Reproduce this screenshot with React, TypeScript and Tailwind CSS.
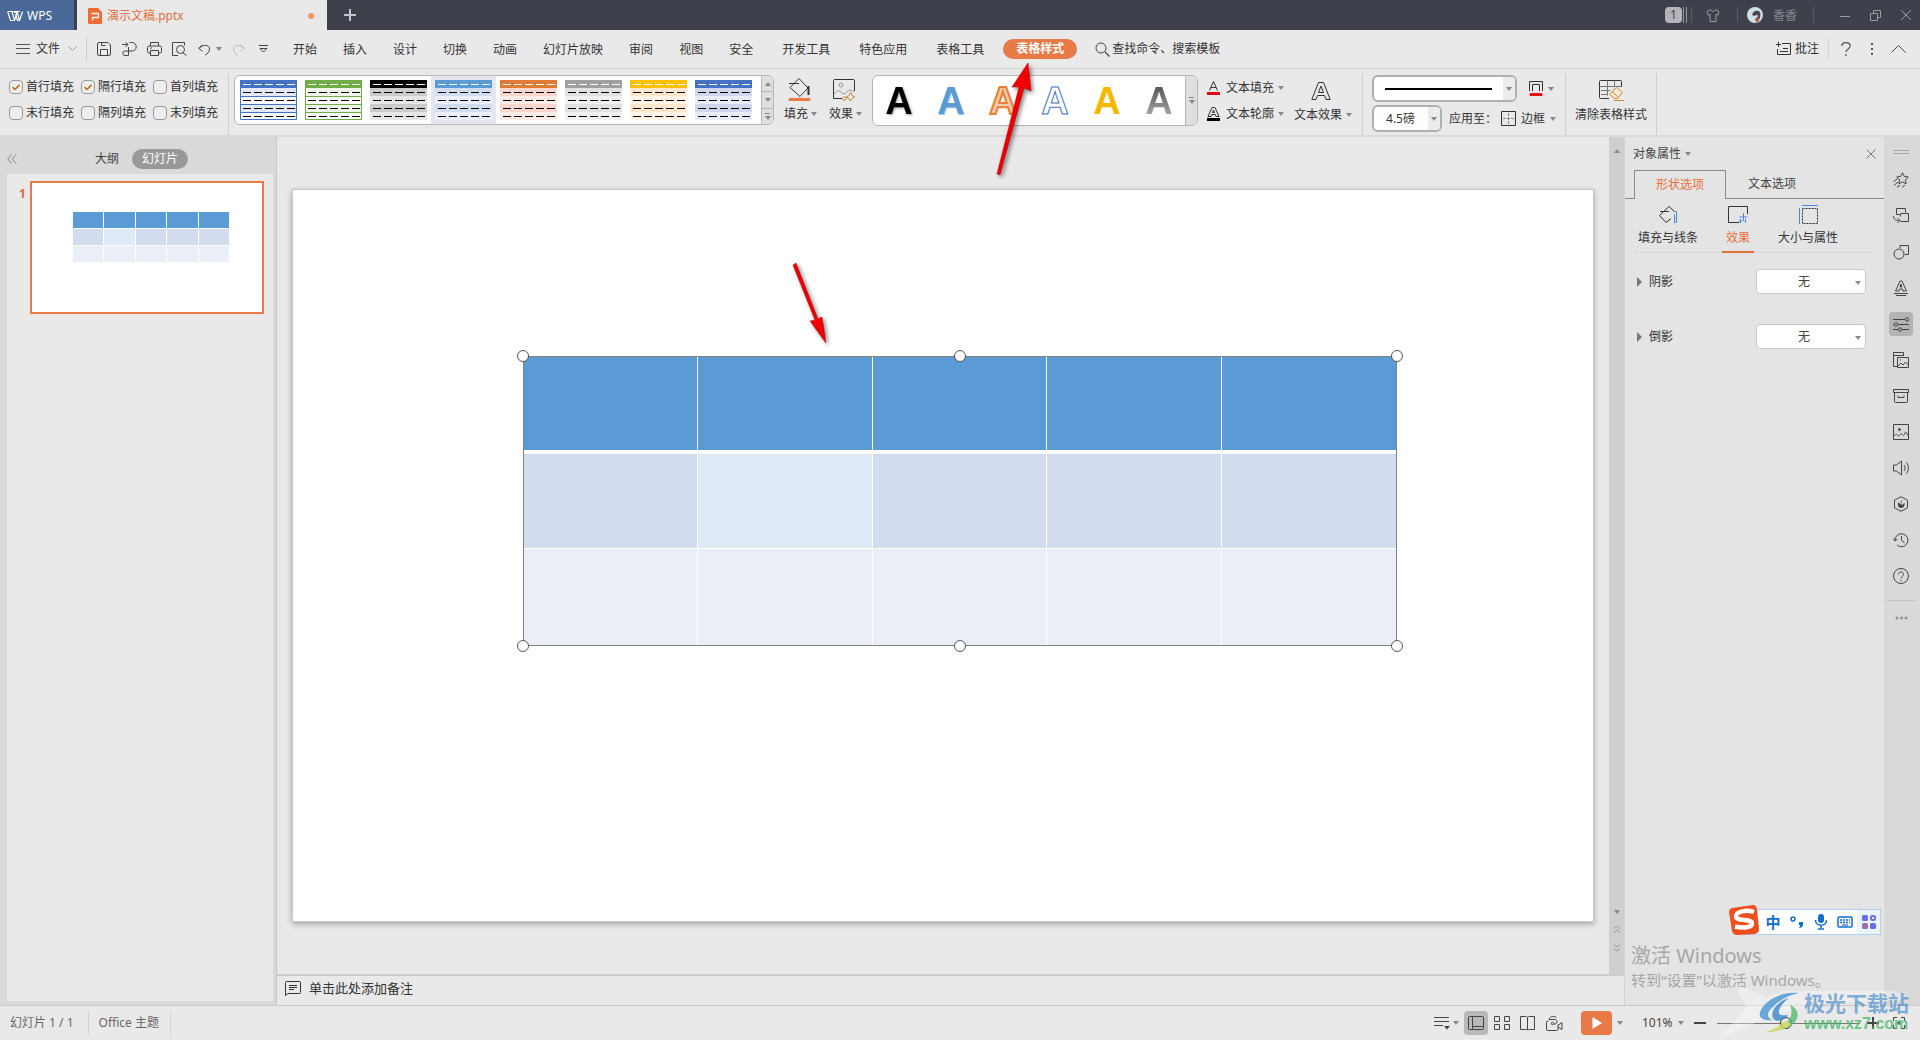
import { useState } from 'react'
import type { ReactNode } from 'react'

type IconProps = { w?: number; h?: number; className?: string; children: ReactNode }

function Icon({ w = 16, h = 16, className = '', children }: IconProps) {
  return (
    <svg
      width={w}
      height={h}
      viewBox={`0 0 ${w} ${h}`}
      fill="none"
      stroke="currentColor"
      strokeLinejoin="round"
      className={`shrink-0 ${className}`}
      aria-hidden="true"
    >
      {children}
    </svg>
  )
}

function Caret({ className = '' }: { className?: string }) {
  return (
    <Icon w={6} h={4} className={`text-[#888] ${className}`}>
      <path d="M0 0h6L3 4z" fill="currentColor" stroke="none" />
    </Icon>
  )
}

function CaretUp() {
  return (
    <Icon w={6} h={4} className="text-[#888]">
      <path d="M0 4h6L3 0z" fill="currentColor" stroke="none" />
    </Icon>
  )
}

const menuShort = ['开始', '插入', '设计', '切换', '动画', '幻灯片放映', '审阅', '视图', '安全']
const menuLong = ['开发工具', '特色应用', '表格工具']

const fillOptions = [
  { label: '首行填充', on: true },
  { label: '隔行填充', on: true },
  { label: '首列填充', on: false },
  { label: '末行填充', on: false },
  { label: '隔列填充', on: false },
  { label: '末列填充', on: false },
]

const tableStyles = [
  { head: '#4472c4', a: '#e2e8f5', b: '#ffffff', lines: true },
  { head: '#70ad47', a: '#eef5e8', b: '#ffffff', lines: true },
  { head: '#000000', a: '#cbcbcb', b: '#e7e7e7', lines: false },
  { head: '#5b9bd5', a: '#d2deef', b: '#eaeff7', lines: false },
  { head: '#e07b36', a: '#f8d7cd', b: '#fcece8', lines: false },
  { head: '#a0a0a0', a: '#e1e1e1', b: '#f0f0f0', lines: false },
  { head: '#ffc000', a: '#ffe8cb', b: '#fff4e7', lines: false },
  { head: '#4472c4', a: '#cfd5ea', b: '#e9ebf5', lines: false },
]

const wordArt = [
  'text-black drop-shadow-[1px_1px_1px_#999]',
  'text-[#5b9bd5] drop-shadow-[1px_1px_0px_#a5c8e8]',
  'text-[#f8cbad] [-webkit-text-stroke:2px_#ed7d31]',
  'text-white [-webkit-text-stroke:1px_#4472c4]',
  'text-[#f5b800]',
  'bg-gradient-to-b from-[#4a4a4a] to-[#b5b5b5] bg-clip-text text-transparent',
]

const bands = ['bg-[#5b9bd5]', 'bg-[#d2deef]', 'bg-[#eaeff7]']
const cols = [0, 1, 2, 3, 4]

function StyleThumb({ head, a, b, lines }: { head: string; a: string; b: string; lines: boolean }) {
  return (
    <Icon w={57} h={40}>
      {[0, 1, 2, 3, 4].map((row) => (
        <g key={row} stroke="none">
          <rect x="0" y={row * 8} width="57" height="8" fill={row === 0 ? head : row % 2 ? a : b} />
          {cols.map((c) => (
            <rect key={c} x={3 + c * 11} y={row * 8 + 4} width="8" height="1" fill={row === 0 ? '#fff' : '#000'} />
          ))}
        </g>
      ))}
      {lines && (
        <path d="M.5 0v39.5h56V0M0 16.500h57M0 24.500h57M0 32.500h57" stroke={head} />
      )}
    </Icon>
  )
}

function TitleBar() {
  return (
    <header className="flex h-[30px] shrink-0 items-center bg-[#3e414b] text-[#b9bac0]">
      <button className="flex h-full w-[74px] items-center gap-1 bg-[#4a6899] pl-[7px] pt-px text-white">
        <Icon className="text-white" h={12}>
          <path d="M1 1.500h4l2.500 9 2.500-8h-3M4 1.500h9M15.500 1.500l-3 9-2.500-9M6.500 10.500h-3l-2.800-9M12.500 10.500h-2L8.500 4" strokeWidth="1.200" />
        </Icon>
        <span>WPS</span>
      </button>
      <div className="ml-[3px] flex h-full w-[250px] items-center bg-[#e9e9e9] pl-[11px] pr-[13px] pt-px text-[#e07040]">
        <Icon w={14} className="mr-[5px]">
          <path d="M1 0h9l4 4v11a1 1 0 0 1-1 1H1a1 1 0 0 1-1-1V1a1 1 0 0 1 1-1z" fill="#f06a3a" stroke="none" />
          <path d="M3.500 5.500h7v4h-6v3" stroke="#fff" strokeWidth="1.300" />
        </Icon>
        <span className="flex-1">演示文稿.pptx</span>
        <span className="size-[6px] rounded-full bg-[#f0935c]" />
      </div>
      <button aria-label="新建" className="ml-[17px]">
        <Icon w={12} h={12} className="text-[#c5c6ca]">
          <path d="M6 0v12M0 6h12" strokeWidth="2" />
        </Icon>
      </button>
      <div className="ml-auto flex h-full items-center">
        <span className="flex h-4 w-[17px] items-center justify-center rounded-sm bg-[#b4b5ba] text-[#3e414b]">1</span>
        <span className="ml-px h-4 w-1 border-x border-[#9a9ca2]" />
        <span className="ml-1 h-4 w-px bg-[#585b65]" />
        <button aria-label="皮肤" className="ml-[14px]">
          <Icon w={14} h={14} className="text-[#9a9ca3]">
            <path d="M4.500 1.500 1 3.500l1 3.500 2-.5v7h6v-7l2 .5 1-3.500-3.500-2C9 4 5 4 4.500 1.500z" />
          </Icon>
        </button>
        <span className="ml-[17px] h-4 w-px bg-[#585b65]" />
        <Icon w={16} className="ml-[9px]">
          <circle cx="8" cy="8" r="8" fill="#cfe0e4" stroke="none" />
          <path d="M5 8c1-4 4-5 6.500-4 2.500 1 2 4 1.500 7l-2 3c.5-3 .5-5-1-6.500C9 9 7 9 5 8z" fill="#4b444a" stroke="none" />
          <path d="M8 12l3-3 1 5-3 1.500z" fill="#a85a50" stroke="none" />
        </Icon>
        <span className="ml-[10px] pt-px text-[#85878f]">香香</span>
        <span className="ml-[16px] h-4 w-px bg-[#585b65]" />
        <button aria-label="最小化" className="ml-[26px]">
          <Icon w={10} h={10} className="text-[#9a9ca3]"><path d="M0 6.500h10" /></Icon>
        </button>
        <button aria-label="还原" className="ml-5">
          <Icon w={11} h={11} className="text-[#9a9ca3]">
            <path d="M.5 3.500h7v7h-7zM3.500 3.500v-3h7v7h-3" />
          </Icon>
        </button>
        <button aria-label="关闭" className="ml-5 mr-[9px]">
          <Icon w={10} h={10} className="text-[#9a9ca3]"><path d="M0 0l10 10M10 0L0 10" /></Icon>
        </button>
      </div>
    </header>
  )
}

function MenuBar() {
  return (
    <nav className="flex h-[39px] shrink-0 items-center border-b border-[#d4d4d4] bg-[#e9e9e9] text-[#333]">
      <button className="ml-4 flex items-center">
        <Icon w={14} h={10} className="mr-[6px] text-[#555]"><path d="M0 .5h14M0 4.500h14M0 9.500h14" /></Icon>
        文件
        <Icon w={9} h={6} className="ml-2 text-[#999]"><path d="M.5.5l4 4 4-4" /></Icon>
      </button>
      <span className="ml-[9px] h-6 w-px bg-[#cbcbcb]" />
      <div className="ml-[10px] flex items-center text-[#444]">
        <button aria-label="保存">
          <Icon w={14} h={14}>
            <path d="M.5 2a1.500 1.500 0 0 1 1.500-1.500h9l2.500 2.500v9a1.500 1.500 0 0 1-1.500 1.500H2A1.500 1.500 0 0 1 .5 12zM3.500 13.500v-6h7v6M4.500.5v3h4" />
          </Icon>
        </button>
        <button aria-label="输出为PDF" className="ml-[11px]">
          <Icon w={15} h={14}>
            <path d="M7.500.5h2.500a4 4 0 0 1 0 8.500H3a2 2 0 0 0 0 4.500h3.500V5M0 2.500h6M3.500.2L6 2.500 3.500 5" />
          </Icon>
        </button>
        <button aria-label="打印" className="ml-[10px]">
          <Icon w={15} h={14}>
            <path d="M3.500 4V.5h8V4M3.500 11H2A1.500 1.500 0 0 1 .5 9.500v-4A1.500 1.500 0 0 1 2 4h11a1.500 1.500 0 0 1 1.500 1.500v4A1.500 1.500 0 0 1 13 11h-1.500M3.500 8.500h8v5h-8zM3 6h2" />
          </Icon>
        </button>
        <button aria-label="打印预览" className="ml-[10px]">
          <Icon w={15} h={14}>
            <path d="M6 13.500H.5V.5h12v3M10.500 10.500l4 3" />
            <circle cx="8.500" cy="7.500" r="4" />
          </Icon>
        </button>
        <button aria-label="撤销" className="ml-[11px] flex items-center gap-[5px]">
          <Icon w={13} h={13}><path d="M4.500 2L.8 5.300 4.500 8.500M1 5.500c3-4 10.500-4.500 10.500.5 0 3-2 5-4.500 6" /></Icon>
          <Caret />
        </button>
        <button aria-label="恢复" className="ml-[10px] text-[#bbb]">
          <Icon w={13} h={13}><path d="M8.500 2l3.700 3.300L8.500 8.500M12 5.500C9 1.500 1.500 1 1.500 6c0 3 2 5 4.500 6" /></Icon>
        </button>
        <button aria-label="自定义快速访问工具栏" className="ml-[14px]">
          <Icon w={9} h={8}><path d="M0 .5h9M1 3.500h7L4.500 7z" /></Icon>
        </button>
      </div>
      <div className="ml-[25px] flex items-center gap-[26px] pt-[2px]">
        {menuShort.map((m) => (
          <button key={m}>{m}</button>
        ))}
      </div>
      <div className="ml-[29px] flex items-center gap-[29px] pt-[2px]">
        {menuLong.map((m) => (
          <button key={m}>{m}</button>
        ))}
      </div>
      <button className="ml-[19px] h-5 rounded-full bg-[#e87a48] px-[13px] font-bold text-white">表格样式</button>
      <button className="ml-[18px] flex items-center gap-[2px]">
        <Icon w={15} h={15} className="text-[#444]">
          <circle cx="6" cy="6" r="5" />
          <path d="M10 10l4.500 4.500" strokeWidth="1.300" />
        </Icon>
        查找命令、搜索模板
      </button>
      <button className="ml-auto flex items-center gap-[4px]">
        <Icon w={15} h={14}>
          <path d="M6 1.500h8.500v11h-13V7M2.500 0v5M0 2.500h5M7 6.500h5M4 9.500h8" />
        </Icon>
        批注
      </button>
      <span className="ml-[9px] h-5 w-px bg-[#d4d4d4]" />
      <button aria-label="帮助" className="ml-[12px]">
        <Icon w={10} h={14} className="text-[#555]">
          <path d="M.8 4c0-4.500 8.400-4.500 8.400 0 0 3-4.200 3-4.200 6M5 12v2" strokeWidth="1.200" />
        </Icon>
      </button>
      <button aria-label="更多" className="ml-[20px]">
        <Icon w={2} h={12} className="text-[#555]"><path d="M1 0v2M1 5v2M1 10v2" strokeWidth="2" /></Icon>
      </button>
      <button aria-label="收起功能区" className="ml-[18px] mr-[14px]">
        <Icon w={15} h={8} className="text-[#444]"><path d="M.5 7.500l7-7 7 7" /></Icon>
      </button>
    </nav>
  )
}

function Ribbon() {
  const [checked, setChecked] = useState(fillOptions.map((o) => o.on))
  return (
    <div className="flex h-[68px] shrink-0 items-start border-b-2 border-[#dadada] bg-[#e9e9e9] text-[#333]">
      {/* Fill options */}
      <div className="ml-[9px] mt-[10px] grid grid-cols-3 gap-y-[10px]">
        {fillOptions.map((o, i) => (
          <label key={o.label} className="relative flex h-4 w-[72px] items-center gap-[3px] whitespace-nowrap">
            <input
              type="checkbox"
              checked={checked[i]}
              onChange={() => setChecked(checked.map((c, j) => (j === i ? !c : c)))}
              className="size-[14px] shrink-0 appearance-none rounded-sm border border-[#999] bg-[#efefef]"
            />
            {checked[i] && (
              <Icon w={8} h={7} className="pointer-events-none absolute left-[3px] top-[5px] text-[#b8741a]">
                <path d="M.5 3l2.500 2.500L7.500.8" strokeWidth="1.600" />
              </Icon>
            )}
            {o.label}
          </label>
        ))}
      </div>
      <span className="ml-[3px] mt-1 h-[62px] w-px bg-[#d0d0d0]" />

      {/* Table style gallery */}
      <div className="ml-[5px] mt-[6px] flex h-[50px] overflow-hidden rounded-md border border-[#b5b5b5] bg-white">
        <div className="flex pl-[1px] pr-[5px]">
          {tableStyles.map((s, i) => (
            <button
              key={i}
              aria-label={`表格样式 ${i + 1}`}
              className={`flex h-full w-[65px] items-center justify-center ${i === 3 ? 'bg-[#e6e7ec]' : ''}`}
            >
              <StyleThumb {...s} />
            </button>
          ))}
        </div>
        <div className="flex w-3 flex-col border-l border-[#b5b5b5] bg-[#dedede]">
          <button aria-label="上一行" className="flex flex-1 items-center justify-center border-b border-[#b5b5b5]"><CaretUp /></button>
          <button aria-label="下一行" className="flex flex-1 items-center justify-center border-b border-[#b5b5b5]"><Caret /></button>
          <button aria-label="展开" className="flex flex-1 flex-col items-center justify-center gap-[2px]">
            <span className="h-px w-[5px] bg-[#888]" />
            <Caret />
          </button>
        </div>
      </div>

      <button className="ml-[10px] mt-[8px] flex w-[33px] flex-col items-center gap-[5px]">
        <Icon w={24} h={24} className="mr-1">
          <path d="M2 6.500h10M12 1.500l9 9.500-8 8.500-10-9z" />
          <path d="M21.500 9v9" strokeWidth="2" />
          <path d="M3 22.500h19" stroke="#e87a48" strokeWidth="3" strokeLinecap="round" />
        </Icon>
        <span className="flex items-center gap-[3px] whitespace-nowrap">填充<Caret /></span>
      </button>
      <button className="ml-[12px] mt-[8px] flex w-[33px] flex-col items-center gap-[5px]">
        <Icon w={24} h={24} className="mr-1">
          <path d="M10 21.500H1.500v-18a1 1 0 0 1 1-1h19a1 1 0 0 1 1 1V14" />
          <circle cx="9" cy="8" r="2" stroke="#999" />
          <path d="M2 17c4-4 5-4 8-1s5-3 8-3l4 2" stroke="#999" />
          <path d="M18.500 15.500l1.500 3 3 1.500-3 1.500-1.500 3-1.500-3-3-1.500 3-1.500zM12 19.500l2.500 2-2.500 2.500-1.500-2.500z" stroke="#c98a3a" />
        </Icon>
        <span className="flex items-center gap-[3px] whitespace-nowrap">效果<Caret /></span>
      </button>

      {/* Word art gallery */}
      <div className="ml-[10px] mt-[6px] flex h-[51px] overflow-hidden rounded-md border border-[#b5b5b5] bg-white">
        <div className="flex">
          {wordArt.map((cls, i) => (
            <button
              key={cls}
              aria-label={`艺术字 ${i + 1}`}
              className="flex w-[52px] items-center justify-center font-['Liberation_Sans',sans-serif] text-[38px] font-bold leading-none"
            >
              <span className={cls}>A</span>
            </button>
          ))}
        </div>
        <button aria-label="展开艺术字" className="flex w-3 flex-col items-center justify-center gap-[2px] border-l border-[#b5b5b5] bg-[#dedede]">
          <span className="h-px w-[5px] bg-[#888]" />
          <Caret />
        </button>
      </div>

      <div className="ml-[9px] mt-[10px] flex flex-col gap-[9px]">
        <button className="flex h-[17px] items-center">
          <Icon w={13} h={14} className="mr-[6px]">
            <path d="M2.500 9.500l4-9 4 9M4 6.500h5" />
            <path d="M1 12.500h11" stroke="#e60012" strokeWidth="3" strokeLinecap="round" />
          </Icon>
          文本填充<Caret className="ml-1" />
        </button>
        <button className="flex h-[17px] items-center">
          <Icon w={13} h={14} className="mr-[6px]">
            <path d="M1 9.500l4-9h3l4 9H9L8.300 7.500H4.700L4 9.500zM5.500 5.500h2l-1-2.500z" />
            <path d="M0 12.500h13" stroke="#000" strokeWidth="3" />
          </Icon>
          文本轮廓<Caret className="ml-1" />
        </button>
      </div>
      <button className="ml-[10px] mt-[12px] flex flex-col items-center gap-[6px]">
        <Icon w={20} h={20} className="mr-1">
          <path d="M.8 18.500L7.500 1.500h5l6.700 17H15l-1.500-4h-7l-1.500 4zM7.500 11.500h5L10 5z" />
        </Icon>
        <span className="flex items-center gap-1">文本效果<Caret /></span>
      </button>
      <span className="ml-[10px] mt-1 h-[62px] w-px bg-[#d0d0d0]" />

      {/* Border settings */}
      <div className="ml-[9px] mt-[6px] flex flex-col gap-[3px]">
        <div className="flex items-center">
          <button aria-label="线型" className="flex h-[27px] w-[145px] items-center overflow-hidden rounded-md border-2 border-[#b0b0b0] bg-white">
            <span className="ml-[11px] h-[2px] flex-1 bg-black" />
            <span className="ml-[11px] flex h-full w-3 items-center justify-center bg-[#ececec]"><Caret /></span>
          </button>
          <button aria-label="线条颜色" className="ml-3 flex items-center gap-[5px]">
            <Icon w={14} h={15}>
              <path d="M.5 10V.5h13V10M3.500 10V3.500h7V10" />
              <path d="M2 13.500h10" stroke="#e60012" strokeWidth="3" strokeLinecap="round" />
            </Icon>
            <Caret />
          </button>
        </div>
        <div className="flex items-center">
          <div className="relative">
            <select
              aria-label="线条粗细"
              className="h-[27px] w-[70px] appearance-none rounded-md border-2 border-[#b0b0b0] bg-white pl-3 text-xs text-[#333]"
            >
              <option>4.5磅</option>
            </select>
            <span className="pointer-events-none absolute inset-y-[2px] right-[2px] flex w-3 items-center justify-center rounded-r bg-[#ececec]">
              <Caret />
            </span>
          </div>
          <span className="ml-[7px] w-[52px] whitespace-nowrap">应用至：</span>
          <button className="flex items-center">
            <Icon w={15} h={15} className="mr-[5px]">
              <path d="M.5.5h14v14H.5z" />
              <path d="M7.500 2v11M2 7.500h11" stroke="#888" strokeDasharray="3 1" />
            </Icon>
            边框<Caret className="ml-[5px]" />
          </button>
        </div>
      </div>
      <span className="ml-[9px] mt-1 h-[62px] w-px bg-[#d0d0d0]" />
      <button className="ml-[9px] mt-[11px] flex flex-col items-center gap-[6px]">
        <Icon w={25} h={21}>
          <path d="M10 18.500H1.500a1 1 0 0 1-1-1V1.500a1 1 0 0 1 1-1h20a1 1 0 0 1 1 1V7" />
          <path d="M8.500.5v15M15.500.5v6M.5 6.500h22M2 10.500h9M2 14.500h7" stroke="#777" />
          <path d="M17.500 7.500l6 5-5 6h-3l-5-4.500zM13 11.500l6 5.500M15 20.500h10" stroke="#c98a3a" fill="#f6ead6" />
        </Icon>
        <span>清除表格样式</span>
      </button>
      <span className="ml-[9px] mt-1 h-[62px] w-px bg-[#d0d0d0]" />
    </div>
  )
}

function SlidePanel() {
  return (
    <aside className="flex w-[277px] shrink-0 flex-col border-r border-[#c6c6c6] bg-[#d9d9d9] pb-1 pl-[7px] pr-[3px]">
      <div className="flex h-[37px] shrink-0 items-center pt-[6px]">
        <button aria-label="收起">
          <Icon w={10} h={10} className="text-[#888]"><path d="M4.500.5L.8 5l3.700 4.500M9 .5L5.300 5 9 9.500" /></Icon>
        </button>
        <button className="ml-[78px] text-[#444]">大纲</button>
        <button className="ml-[13px] h-5 rounded-full bg-[#999] px-[10px] text-white">幻灯片</button>
      </div>
      <div className="flex flex-1 items-start bg-[#e9e9e9] pl-[12px] pt-[7px]">
        <span className="w-[11px] pt-[5px] font-bold text-[#e8653a]">1</span>
        <div className="aspect-[234/133] w-[234px] border-2 border-[#e87a48] bg-white px-[33px] pt-[29px]">
          <table className="ml-[8px] w-[157px] table-fixed border-separate border-spacing-0">
            <tbody>
              {bands.map((bg, r) => (
                <tr key={bg}>
                  {cols.map((c) => (
                    <td
                      key={c}
                      className={`h-[17px] border-b border-r border-white p-0 ${r === 1 && c === 1 ? 'bg-[#deeaf6]' : r === 1 ? 'bg-[#d2dcee]' : bg}`}
                    />
                  ))}
                </tr>
              ))}
            </tbody>
          </table>
        </div>
      </div>
    </aside>
  )
}

const handles = [
  'left-0 top-0',
  'left-1/2 top-0',
  'left-full top-0',
  'left-0 top-full',
  'left-1/2 top-full',
  'left-full top-full',
]

function Canvas() {
  return (
    <main className="flex min-w-0 flex-1 flex-col">
      <div className="flex flex-1">
        <div className="flex flex-1 bg-[#e9e9e9] px-[15px] py-[52px]">
          <div className="relative flex-1 border border-[#c6c6c6] bg-white shadow-[0_2px_6px_rgba(0,0,0,0.3)]">
            <div className="absolute left-[230px] top-[166px] w-[874px] outline outline-1 -outline-offset-1 outline-[#808080]">
              <table className="w-full table-fixed border-separate border-spacing-0">
                <tbody>
                  {bands.map((bg, r) => (
                    <tr key={bg}>
                      {cols.map((c) => (
                        <td
                          key={c}
                          className={`border-white p-0 ${c < 4 ? 'border-r' : ''} ${r === 0 ? 'h-[98px] border-b-4' : r === 1 ? 'h-[95px] border-b' : 'h-[97px]'} ${r === 1 && c === 1 ? 'bg-[#deeaf6]' : r === 1 ? 'bg-[#d2dcee]' : bg}`}
                        />
                      ))}
                    </tr>
                  ))}
                </tbody>
              </table>
              {handles.map((pos) => (
                <span key={pos} className={`absolute size-3 -translate-x-1/2 -translate-y-1/2 rounded-full border border-[#555] bg-white ${pos}`} />
              ))}
            </div>
          </div>
        </div>
        <div className="flex w-[15px] shrink-0 flex-col items-center bg-[#cfcfcf] py-3">
          <CaretUp />
          <Caret className="mt-auto" />
          <Icon w={6} h={8} className="mt-[11px] text-[#999]"><path d="M0 3.500L3 1l3 2.500M0 7.500L3 5l3 2.500" /></Icon>
          <Icon w={6} h={8} className="mb-[10px] mt-[11px] text-[#999]"><path d="M0 .5L3 3l3-2.500M0 4.500L3 7l3-2.500" /></Icon>
        </div>
      </div>
      <div className="flex h-[31px] shrink-0 items-center border-t-2 border-[#cdcdcd] bg-[#e9e9e9] pb-1 pl-2 text-[13px] text-[#333]">
        <Icon w={16} h={15} className="mr-2">
          <path d="M.5 14.500V1.500a1 1 0 0 1 1-1h13a1 1 0 0 1 1 1v10a1 1 0 0 1-1 1H3zM4 4.500h8M4 6.500h8M4 8.500h5" />
        </Icon>
        单击此处添加备注
      </div>
    </main>
  )
}

function EffectRow({ label }: { label: string }) {
  return (
    <div className="flex items-center">
      <Icon w={6} h={10} className="text-[#777]"><path d="M0 0v10l5-5z" fill="currentColor" stroke="none" /></Icon>
      <label htmlFor={label} className="ml-[6px] text-[#333]">{label}</label>
      <div className="relative ml-auto">
        <select
          id={label}
          className="h-[25px] w-[110px] appearance-none rounded border border-[#c8c8c8] bg-white pl-[41px] text-xs text-[#444]"
        >
          <option>无</option>
        </select>
        <Caret className="pointer-events-none absolute right-[5px] top-[12px]" />
      </div>
    </div>
  )
}

function PropertyPanel() {
  return (
    <aside className="flex w-[260px] shrink-0 flex-col border-l border-[#d4d4d4] bg-[#e4e4e4]">
      <div className="flex h-[33px] items-center pl-2 pr-2 text-[#444]">
        对象属性
        <Caret className="ml-1" />
        <button aria-label="关闭面板" className="ml-auto">
          <Icon w={10} h={10} className="text-[#777]"><path d="M.5.5l9 9M9.500.5l-9 9" /></Icon>
        </button>
      </div>
      <div className="flex h-[29px] text-[#444]">
        <span className="w-[9px] border-b border-[#888]" />
        <button className="w-[92px] border-x border-t border-[#888] text-[#e8703c]">形状选项</button>
        <button className="flex-1 border-b border-[#888] pl-[22px] text-left">文本选项</button>
      </div>
      <div className="mx-[9px] flex border-b border-[#d6d6d6] pt-[6px]">
        <button className="flex flex-col items-center gap-[6px] px-[4px] pb-[5px] text-[#333]">
          <Icon w={20} h={19}>
            <path d="M2 6.500h9M11 1.500l5.500 5M11 1.500l-9.500 9 6.500 7 5-4" />
            <path d="M15.500 6.500h3v11h-2v-8" stroke="#4a86e8" />
          </Icon>
          填充与线条
        </button>
        <button className="-mb-px ml-5 flex flex-col items-center gap-[6px] border-b-2 border-[#e0703c] px-1 pb-[5px] text-[#e8703c]">
          <Icon w={20} h={19} className="text-[#333]">
            <path d="M11 17.500H.5V1.500h19V9" />
            <path d="M15.500 8v8M11.500 12h8M12.500 14v4M10.500 16h4M17.500 14v4" stroke="#4a86e8" />
          </Icon>
          效果
        </button>
        <button className="ml-5 flex flex-col items-center gap-[6px] px-1 pb-[5px] text-[#333]">
          <Icon w={20} h={19}>
            <path d="M4.500 3.500h15v15h-15z" strokeDasharray="2 1" />
            <path d="M4 .5h16M1.500 3v16" stroke="#4a86e8" />
          </Icon>
          大小与属性
        </button>
      </div>
      <div className="flex flex-col gap-[30px] pl-3 pr-[18px] pt-[16px]">
        <EffectRow label="阴影" />
        <EffectRow label="倒影" />
      </div>
      {/* System activation notice */}
      <div className="mt-auto whitespace-nowrap pb-[15px] pl-[6px] text-[#a6a6a6]">
        <p className="text-[20px] leading-[28px]">激活 Windows</p>
        <p className="text-[15px] leading-5">转到“设置”以激活 Windows。</p>
      </div>
    </aside>
  )
}

const sideTools: { label: string; art: ReactNode }[] = [
  { label: '动画', art: <path d="M9.500.8l1.800 3.600 4 .6-2.900 2.800.7 4-3.600-1.900-3.600 1.900.7-4L3.700 5l4-.6zM.5 9.500l4-2.500M1 13.500l4-3.500M4 15.500l3-2.500M9 15.500l3-2.500" /> },
  { label: '切换', art: <path d="M3.500 6.500V.5h9v4M7.500 5.500h8v8h-8M3.500 6.500h4v2M.5 8c0 4 3 4.500 6 4.500M4.500 10l2.500 2.500L4.500 15" /> },
  { label: '形状', art: <><circle cx="6" cy="10" r="5" /><path d="M7 4V1.500h8.500v9H12" /></> },
  { label: '字体', art: <path d="M2.500 11L7 1h2l4.500 10H10L9.500 9h-3L6 11zM7 7h2L8 4zM1 13.500h14M3 15.500h10" /> },
  { label: '属性', art: <><path d="M0 3.500h12M5 8.500h11M0 8.500h1M0 13.500h5M9 13.500h7" /><circle cx="14" cy="3.500" r="1.700" /><circle cx="3" cy="8.500" r="1.700" /><circle cx="7" cy="13.500" r="1.700" /></> },
  { label: '素材', art: <path d="M4 14.500H.5V.5h10V4M.5 3.500h10M4.500 5.500h11v10h-11zM5 14l3-3 2 2 2.500-3 3 3M7 8h1" /> },
  { label: '备份', art: <path d="M.5 1.500h15v3H.5zM1.500 4.500v9a1 1 0 0 0 1 1h11a1 1 0 0 0 1-1v-9M5 7.500v2h6v-2" /> },
  { label: '图片', art: <><path d="M.5.5h15v15H.5zM1 12c2-3 3-1 4 0s3-4 4-2 2 2 3-1 2 2 3.500 3" /><circle cx="6.500" cy="5.500" r="1" fill="currentColor" /></> },
  { label: '声音', art: <path d="M.5 5v6h3l5 4V1l-5 4zM11 5c1.500 1.500 1.500 4.500 0 6M13.500 2.500c2.500 3 2.500 8 0 11" /> },
  { label: '推荐', art: <><path d="M8 .7l6.500 3.500v7.600L8 15.300l-6.500-3.500V4.200z" /><path d="M8 4c2 2 1 4 0 5 0-2-2-1-2-3-2 2-1 6 2 6s4-3 3.500-5L9 9" fill="currentColor" stroke="none" /></> },
  { label: '历史', art: <path d="M2 9a6.500 6.500 0 1 1 2 4M.3 6.500L2 9l2.500-2M8.500 4v4l3 3" /> },
  { label: '帮助', art: <><circle cx="8" cy="8" r="7.500" /><path d="M5.500 6.500c0-3.500 5-3.500 5 0 0 2-2.500 2-2.500 4M8 12v1.200" /></> },
]

function SideBar() {
  return (
    <aside className="flex w-9 shrink-0 flex-col items-center bg-[#d9d9d9] pr-[2px] pt-[13px] text-[#444]">
      <span className="mb-[14px] h-1 w-4 border-y border-[#aaa]" />
      <div className="flex flex-col gap-3">
        {sideTools.map((t) => (
          <button
            key={t.label}
            aria-label={t.label}
            className={`flex size-6 items-center justify-center rounded ${t.label === '属性' ? 'bg-[#b3b3b3]' : ''}`}
          >
            <Icon>{t.art}</Icon>
          </button>
        ))}
      </div>
      <span className="mt-3 h-px w-7 bg-[#c4c4c4]" />
      <button aria-label="更多" className="mt-[15px]">
        <Icon w={13} h={4} className="text-[#777]">
          <circle cx="2" cy="2" r="1" /><circle cx="6.500" cy="2" r="1" /><circle cx="11" cy="2" r="1" />
        </Icon>
      </button>
    </aside>
  )
}

function StatusBar() {
  const [zoom, setZoom] = useState(48)
  return (
    <footer className="flex h-[35px] shrink-0 items-center border-t border-[#c8c8c8] bg-[#e9e9e9] text-[#666]">
      <span className="ml-[10px]">幻灯片 1 / 1</span>
      <span className="ml-[14px] h-6 w-px bg-[#d4d4d4]" />
      <span className="ml-[10px]">Office 主题</span>
      <span className="ml-[11px] h-6 w-px bg-[#d4d4d4]" />
      <div className="ml-auto flex items-center text-[#444]">
        <button aria-label="备注" className="flex items-center gap-[3px]">
          <Icon w={16} h={14}>
            <path d="M0 1.500h15M0 5.500h15M0 9.500h9" />
            <path d="M10 10h6l-3 3.500z" fill="currentColor" stroke="none" />
          </Icon>
          <Caret />
        </button>
        <button aria-label="普通视图" className="ml-[5px] flex size-6 items-center justify-center rounded bg-[#b8b8b8]">
          <Icon w={16} h={14}><path d="M.5 1.500a1 1 0 0 1 1-1h13a1 1 0 0 1 1 1v11a1 1 0 0 1-1 1h-13a1 1 0 0 1-1-1zM4.500.5v13M4.500 10.500h11" /></Icon>
        </button>
        <button aria-label="幻灯片浏览" className="ml-[6px]">
          <Icon w={16} h={14}><path d="M.5.5h5v5h-5zM10.500.5h5v5h-5zM.5 8.500h5v5h-5zM10.500 8.500h5v5h-5z" /></Icon>
        </button>
        <button aria-label="阅读视图" className="ml-[10px]">
          <Icon w={16} h={15}><path d="M.5.5h5c1.500 0 2 .5 2 1.500v12c0-.5-1-.5-2-.5h-5zM14.500.5h-5c-1.500 0-2 .5-2 1.500M14.500.5v13h-5c-1 0-2 0-2 .5" /></Icon>
        </button>
        <button aria-label="演讲者备注" className="ml-[10px]">
          <Icon w={17} h={15}>
            <path d="M2.500 5H2A1.500 1.500 0 0 0 .5 6.500V13A1.500 1.500 0 0 0 2 14.500h8.500A1.500 1.500 0 0 0 12 13V8.500M12 9.500l4-3v7l-4-2.500M3 3c1-3 6-3 7.500-1.500M3 3.500h6.500a2.500 2.500 0 0 1 0 4.500h-2" />
            <circle cx="6.500" cy="7.500" r="1.200" />
          </Icon>
        </button>
        <button aria-label="放映" className="ml-[18px] flex h-6 w-[31px] items-center justify-center rounded bg-[#e87a48]">
          <Icon w={10} h={12}><path d="M.5 0v12L10 6z" fill="#fff" stroke="none" /></Icon>
        </button>
        <Caret className="ml-[5px]" />
        <span className="ml-[19px] w-[33px]">101%</span>
        <Caret className="ml-[3px]" />
        <button aria-label="缩小" className="ml-[10px] h-[2px] w-3 bg-[#444]" />
        <input
          type="range"
          aria-label="显示比例"
          value={zoom}
          onChange={(e) => setZoom(Number(e.target.value))}
          className="ml-[11px] h-3 w-[143px] appearance-none bg-[linear-gradient(#777,#777)] bg-[length:100%_1px] bg-center bg-no-repeat [&::-webkit-slider-thumb]:size-3 [&::-webkit-slider-thumb]:appearance-none [&::-webkit-slider-thumb]:rounded-full [&::-webkit-slider-thumb]:border [&::-webkit-slider-thumb]:border-[#333] [&::-webkit-slider-thumb]:bg-[#e9e9e9]"
        />
        <button aria-label="放大" className="ml-[7px]">
          <Icon w={12} h={12}><path d="M6 0v12M0 6h12" strokeWidth="2" /></Icon>
        </button>
        <button aria-label="适应窗口" className="ml-[14px] mr-[15px]">
          <Icon w={12} h={12}><path d="M.5 4V.5H4M8 .5h3.500V4M11.500 8v3.500H8M4 11.500H.5V8M6 4v4M4 6h4" /></Icon>
        </button>
      </div>
    </footer>
  )
}

function InputMethodBar() {
  return (
    <div className="absolute bottom-[105px] right-[39px] flex h-[26px] w-[141px] items-center border border-[#b4cdea] bg-white pl-[20px] text-[#0f6fd0]">
      <Icon w={32} h={32} className="absolute -left-[13px] -top-[6px]">
        <path d="M4 4L25 1q3 0 4 4l2 20q0 4-4 5L9 31q-4 0-5-4L1 8q0-3 3-4z" fill="#f04e1e" stroke="none" />
        <path d="M26 8C18 5 8 8 8 12.500c0 5 16 2 16 7 0 4-9 5-17 3" stroke="#fff" strokeWidth="4.500" />
      </Icon>
      <span className="w-6 text-center text-[15px] font-bold leading-none">中</span>
      <Icon w={24} h={16}>
        <circle cx="8" cy="5" r="2" strokeWidth="1.500" />
        <path d="M14 8h4v3q-1 3-4 3 1-1 1-3h-1z" fill="currentColor" stroke="none" />
      </Icon>
      <Icon w={24} h={16}>
        <rect x="9" y="0" width="6" height="9" rx="3" fill="currentColor" stroke="none" />
        <path d="M6.500 6c0 7 11 7 11 0M12 11v3M9 15h6" strokeWidth="1.500" />
      </Icon>
      <Icon w={24} h={12}>
        <rect x="5" y="1" width="14" height="10" rx="1" strokeWidth="1.500" />
        <path d="M7 4h10M7 6.500h10" strokeDasharray="2 1" strokeWidth="1.500" />
        <path d="M9 9h6" strokeWidth="1.200" />
      </Icon>
      <span className="flex h-full flex-1 items-center justify-center bg-[#e8f6fb]">
        <Icon w={14} h={14}>
          <rect x="0" y="0" width="6" height="6" rx="1.500" fill="#6a6cf0" stroke="none" />
          <rect x="9" y="1" width="4" height="4" rx="1.500" stroke="#6a6cf0" strokeWidth="2" />
          <rect x="0" y="8" width="6" height="6" rx="1.500" fill="#9a6fb0" stroke="none" />
          <rect x="8" y="8" width="6" height="6" rx="1.500" fill="#6a6cf0" stroke="none" />
        </Icon>
      </span>
    </div>
  )
}

function SiteBadge() {
  return (
    <div className="pointer-events-none absolute bottom-[7px] right-[11px] flex items-center">
      <svg width="190" height="64" viewBox="0 0 190 64" fill="none" className="absolute -left-[40px] -top-[10px]" aria-hidden="true">
        <path d="M16 3l32 13 16-6h112l14 8-100 6-36 10L0 58l27-32z" fill="#fff" opacity="0.350" />
      </svg>
      <svg width="42" height="42" viewBox="0 0 42 42" fill="none" className="relative mr-[3px] opacity-75" aria-hidden="true">
        <path d="M40 2C22 0 5 10 1 21c-2 7 6 9 12 8-6-3-5-8 1-13C20 9 30 4 40 2z" fill="#3f8fd2" />
        <path d="M30 7C17 11 11 21 14 27c3 5 11 3 15-3-6 1-10 0-9-4 1-5 5-9 10-13z" fill="#2f7fc8" />
        <path d="M31 14c9 3 10 13 3 19-8 7-18 7-25 8 10-4 19-8 22-14 2-4 2-8 0-13z" fill="#4cb86c" />
        <path d="M25 30l8 3c-7 6-16 8-26 8 8-3 14-6 18-11z" fill="#c9d84e" />
      </svg>
      <div className="relative whitespace-nowrap font-bold">
        <p className="text-[21px] leading-[24px] text-[#3f86cc]/65">极光下载站</p>
        <p className="font-['Liberation_Sans',sans-serif] text-base leading-[18px] text-[#43b868]/75">www.xz7.com</p>
      </div>
    </div>
  )
}

function PointerArrows() {
  return (
    <svg
      width="244"
      height="290"
      viewBox="0 0 244 290"
      className="pointer-events-none absolute left-[790px] top-[60px] drop-shadow-[2px_2px_2px_rgba(0,0,0,0.5)]"
      aria-hidden="true"
    >
      <g fill="#f00000" stroke="#b00010" strokeWidth="0.500">
        <path d="M238 3l3 28-7-3-24 87-3-1 22-87-7 0z" />
        <path d="M3 205l3-2 22 56 4-2 4 26-16-22 5-1z" />
      </g>
    </svg>
  )
}

export default function App() {
  return (
    <div className="relative flex min-h-screen w-full flex-col overflow-hidden bg-[#e9e9e9] font-['Noto_Sans','Noto_Sans_CJK_SC',sans-serif] text-xs">
      <TitleBar />
      <MenuBar />
      <Ribbon />
      <div className="flex flex-1">
        <SlidePanel />
        <Canvas />
        <PropertyPanel />
        <SideBar />
      </div>
      <StatusBar />
      <InputMethodBar />
      <SiteBadge />
      <PointerArrows />
    </div>
  )
}
